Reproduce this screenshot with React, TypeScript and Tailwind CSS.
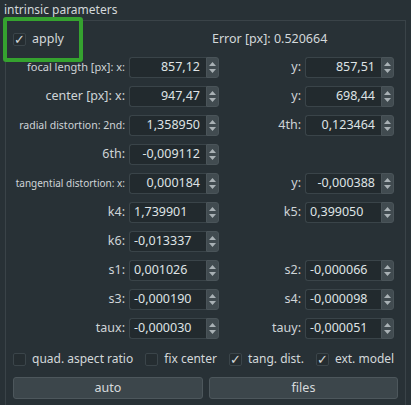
import React from 'react';

type Spin = { value: string; left?: boolean };
type Row = { l: string; lSize?: string; a: Spin; r?: string; b?: Spin };

const rows: Row[] = [
  { l: 'focal length [px]: x:', lSize: 'text-[11px]', a: { value: '857,12' }, r: 'y:', b: { value: '857,51' } },
  { l: 'center [px]: x:', a: { value: '947,47' }, r: 'y:', b: { value: '698,44' } },
  { l: 'radial distortion: 2nd:', lSize: 'text-[10.5px]', a: { value: '1,358950' }, r: '4th:', b: { value: '0,123464' } },
  { l: '6th:', a: { value: '-0,009112' } },
  { l: 'tangential distortion: x:', lSize: 'text-[10px]', a: { value: '0,000184' }, r: 'y:', b: { value: '-0,000388' } },
  { l: 'k4:', a: { value: '1,739901', left: true }, r: 'k5:', b: { value: '0,399050', left: true } },
  { l: 'k6:', a: { value: '-0,013337', left: true } },
  { l: 's1:', a: { value: '0,001026', left: true }, r: 's2:', b: { value: '-0,000066', left: true } },
  { l: 's3:', a: { value: '-0,000190', left: true }, r: 's4:', b: { value: '-0,000098', left: true } },
  { l: 'taux:', a: { value: '-0,000030', left: true }, r: 'tauy:', b: { value: '-0,000051', left: true } },
];

function SpinBox({ value, left, width }: Spin & { width: string }) {
  return (
    <div className={`flex h-[21px] shrink-0 ${width}`}>
      <div
        className={`flex flex-1 items-center rounded-l-[3px] border border-r-0 border-[#3a4449] bg-[#222a2e] text-[12.5px] text-[#dfe3e5] ${
          left ? 'justify-start pl-[4px]' : 'justify-end pr-[6px]'
        }`}
      >
        {value}
      </div>
      <div className="flex w-[13px] flex-col items-center justify-center gap-[3px] rounded-r-[3px] border border-[#4a5459] bg-[#414b50]">
        <svg width="7" height="4" viewBox="0 0 7 4">
          <path d="M0 4 L3.5 0 L7 4 Z" fill="#a9b1b5" />
        </svg>
        <svg width="7" height="4" viewBox="0 0 7 4">
          <path d="M0 0 L3.5 4 L7 0 Z" fill="#a9b1b5" />
        </svg>
      </div>
    </div>
  );
}

function Check({ checked, label, size = 'text-[12px]' }: { checked?: boolean; label: string; size?: string }) {
  return (
    <div className="flex shrink-0 items-center gap-[6px] whitespace-nowrap">
      <div className="flex h-[13px] w-[13px] shrink-0 items-center justify-center rounded-[2px] border border-[#3b454a] bg-[#252d31] text-[13px] leading-none text-[#d6dadc]">
        {checked ? '✓' : ''}
      </div>
      <span className={`${size} text-[#d3d8da]`}>{label}</span>
    </div>
  );
}

export default function App() {
  return (
    <div
      className="relative h-[405px] w-[411px] overflow-hidden bg-[#283136] text-[#cfd4d7]"
      style={{ fontFamily: '"Noto Sans", "Open Sans", sans-serif' }}
    >
      {/* group title */}
      <div className="h-[20px] pl-[4px] pt-[1px] text-[12px] leading-[17px] text-[#d3d8da]">intrinsic parameters</div>

      <div className="ml-[5px] mr-[5px] h-[400px] border-l border-r border-t border-[#3a4348]">
        {/* apply + error */}
        <div className="flex h-[36px] items-center">
          <div className="ml-[7px]">
            <Check checked label="apply" size="text-[12.5px]" />
          </div>
          <div className="ml-[148px] text-[12.5px] text-[#d3d8da]">Error [px]: 0.520664</div>
        </div>

        {/* parameter grid */}
        <div className="flex flex-col gap-[8px]">
          {rows.map((row) => (
            <div key={row.l} className="flex h-[21px] items-center">
              <div className={`w-[123px] shrink-0 whitespace-nowrap pr-[4px] text-right ${row.lSize ?? 'text-[12.5px]'} text-[#cfd4d7]`}>
                {row.l}
              </div>
              <SpinBox {...row.a} width="w-[90px]" />
              {row.r && row.b && (
                <>
                  <div className="w-[86px] shrink-0 pr-[4px] text-right text-[12.5px] text-[#cfd4d7]">{row.r}</div>
                  <SpinBox {...row.b} width="w-[89px]" />
                </>
              )}
            </div>
          ))}
        </div>

        {/* options */}
        <div className="ml-[7px] mt-[13px] flex h-[14px] items-center gap-[12px]">
          <Check label="quad. aspect ratio" />
          <Check label="fix center" />
          <Check checked label="tang. dist." />
          <Check checked label="ext. model" />
        </div>

        {/* buttons */}
        <div className="ml-[7px] mt-[11px] flex gap-[6px]">
          <button className="h-[22px] w-[190px] rounded-[3px] border border-[#4d575c] bg-[#3c464b] text-[12.5px] text-[#d6dadc]">
            auto
          </button>
          <button className="h-[22px] w-[189px] rounded-[3px] border border-[#4d575c] bg-[#3c464b] text-[12.5px] text-[#d6dadc]">
            files
          </button>
        </div>
      </div>

      {/* highlight around apply */}
      <div className="absolute left-[3px] top-[17px] h-[45px] w-[80px] rounded-[3px] border-[4px] border-[#35a22f]" />
    </div>
  );
}
